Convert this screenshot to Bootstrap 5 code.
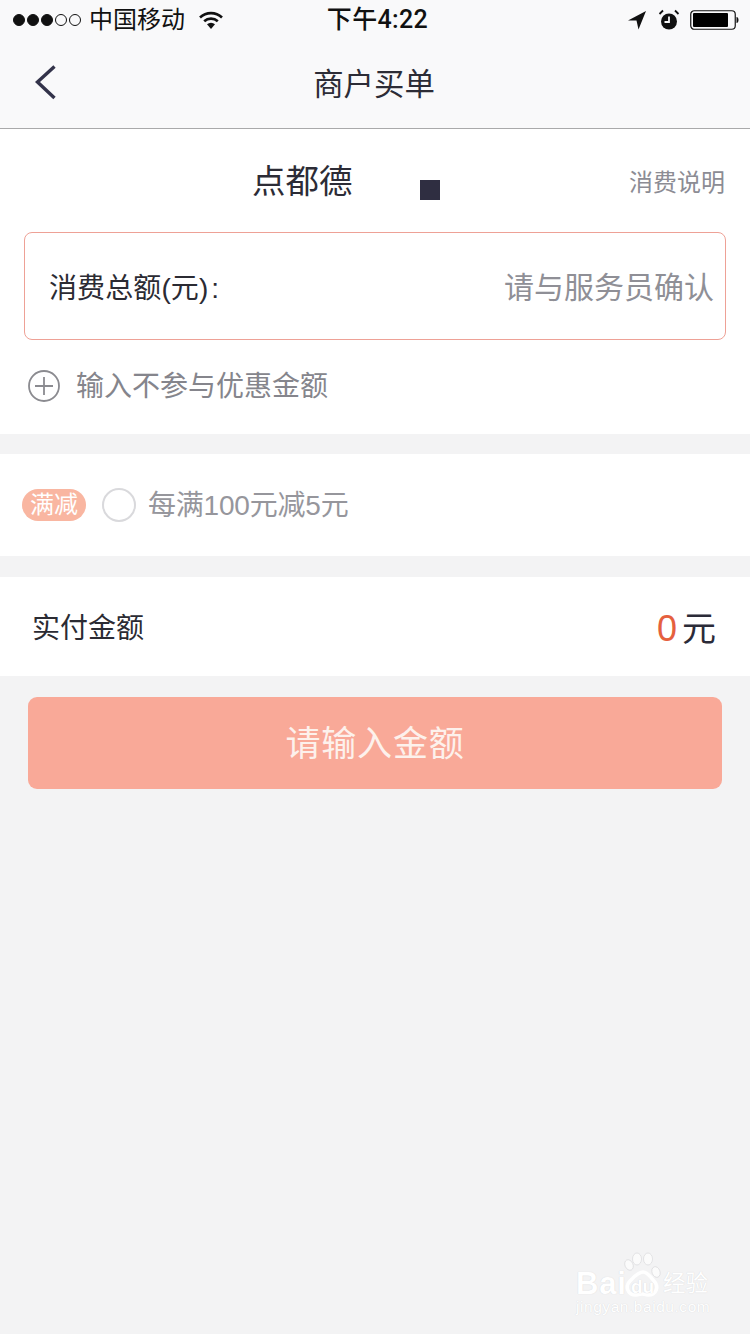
<!DOCTYPE html>
<html lang="zh">
<head>
<meta charset="utf-8">
<title>商户买单</title>
<link rel="stylesheet" href="https://cdn.jsdelivr.net/npm/bootstrap@5.3.0/dist/css/bootstrap.min.css">
<style>
html,body{width:750px;height:1334px;overflow:hidden}
body{background:#f3f3f4;font-family:"Liberation Sans","Noto Sans CJK SC",sans-serif;color:#2b2b38;position:relative}
.topbar{background:#f9f9fa;border-bottom:1px solid #a9a9aa;height:129px}
.statusrow{height:40px;padding:0 11px 0 13px;font-size:24px;color:#111}
.sigdots{gap:2px;width:68px}
.sigdot{width:12px;height:12px;border-radius:50%;border:1px solid #111}
.sigdot.on{background:#111}
.carrier{margin-left:8px;line-height:40px;width:97px;white-space:nowrap}
.wifi{margin-left:12px}
.alarmicon{margin:0 10px 0 11px}
.clock{position:absolute;left:0;right:0;top:0;line-height:40px;text-align:center;font-family:Roboto,"Noto Sans CJK SC",sans-serif;font-weight:500;font-size:25px;letter-spacing:.35px;pointer-events:none;padding-left:5px;color:#111}
.navrow{height:88px;position:relative}
.backlink{position:absolute;left:33px;top:24px;line-height:0}
.navname{font-size:30.4px;line-height:88px;text-align:center;color:#2c2c36;padding-right:2px}
.sheet{background:#fff}
.mainsheet{height:305px;padding-top:1px}
.titlerow{height:102px;padding:0 25px 0 252px}
.shopname{font-size:33.500px;line-height:1;margin-top:2px;color:#2c2c36}
.helplink{font-size:24px;color:#8c8c94;margin-top:3px}
.blocksq{position:absolute;left:420px;top:180px;width:20px;height:20px;background:#2f2e41}
.amountbox{margin:0 24px;height:108px;border:1px solid #eea196;border-radius:8px;padding:0 11px 0 24px}
.amountlabel{font-size:28px;color:#2b2b33;margin-top:5px;letter-spacing:.1px}
.labelcolon{margin-left:3px}
.amounthint{font-size:30px;color:#8f8f96;white-space:nowrap;margin-top:2px}
.extra{margin:0 0 0 28px;height:92px;gap:16px;font-size:28px;color:#85858c}
.extratext{margin-top:1px}
.promo{height:102px;margin-top:20px;padding-left:22px}
.promotag{width:64px;height:32px;border-radius:16px;background:#f9b6a1;color:#fff;font-size:24px;line-height:32px;text-align:center}
.radiomark{width:34px;height:34px;border-radius:50%;border:2px solid #d9d9dc;margin-left:16px;margin-right:12px;background:#fff}
.promotext{font-size:28px;color:#96969c;letter-spacing:-.2px;white-space:nowrap;margin-top:2px}
.payrow{height:99px;margin-top:21px;padding:0 34px 0 32px}
.paylabel{font-size:28px;color:#2b2b33;margin-top:5px}
.paysum{font-size:34px;margin-top:5px;line-height:1}
.payzero{color:#e5603e;font-size:36px;margin-right:5px}
.submitbtn{display:block;width:694px;height:92px;margin:21px 28px 0;background:#f9a998;border:0;border-radius:9px;color:#fdf1ec;font-size:35px;letter-spacing:.8px;padding:3px 0 0}
.submitbtn:hover,.submitbtn:disabled{background:#f9a998;color:#fdf1ec;opacity:1}
.mark-wm{position:absolute;left:576px;top:1252px;width:134px;height:66px;color:#fff;text-shadow:0 0 1px #cfcfd2}
.wm-bai{position:absolute;left:0;top:15px;font-size:31px;font-weight:700;line-height:34px;letter-spacing:.8px}
.wm-du{position:absolute;left:50px;top:24px;width:33px;text-align:center;font-size:19px;font-weight:700;line-height:22px}
.wm-jy{position:absolute;left:87px;top:19px;font-size:22.500px;line-height:26px;white-space:nowrap}
.wm-url{position:absolute;left:0;top:46px;font-size:15.500px;line-height:18px;white-space:nowrap;letter-spacing:.55px}
.wm-paw{position:absolute;left:48px;top:0}
</style>
</head>
<body>
<header class="topbar">
  <div class="statusrow d-flex align-items-center">
    <div class="sigdots d-flex">
      <span class="sigdot on"></span><span class="sigdot on"></span><span class="sigdot on"></span><span class="sigdot"></span><span class="sigdot"></span>
    </div>
    <span class="carrier">中国移动</span>
    <svg class="wifi" width="26" height="20" viewBox="0 0 26 20"><path d="M2 7.500a16 16 0 0 1 22 0" fill="none" stroke="#111" stroke-width="2.600"/><path d="M6.200 11.300a10 10 0 0 1 13.600 0" fill="none" stroke="#111" stroke-width="2.600"/><path d="M9 14.200a6 6 0 0 1 8 0L13 19z" fill="#111"/></svg>
    <div class="ms-auto d-flex align-items-center">
      <svg width="20" height="20" viewBox="0 0 20 20"><path d="M19 1 1 10.500h8.500L11.500 19.500z" fill="#111"/></svg>
      <svg class="alarmicon" width="22" height="22" viewBox="0 0 22 22"><circle cx="11" cy="12.500" r="8" fill="#111"/><path d="M11 7.500v5.500H6.500" fill="none" stroke="#f9f9fa" stroke-width="1.800"/><path d="M1.500 5 5 1.500M20.500 5 17 1.500" stroke="#111" stroke-width="1.800"/></svg>
      <svg width="49" height="20" viewBox="0 0 49 20"><rect x=".75" y=".75" width="44.500" height="18.500" rx="3.500" fill="none" stroke="#111" stroke-width="1.200"/><rect x="3" y="3" width="35" height="14" rx="1" fill="#000"/><path d="M46.500 7c1.500.2 2 1.500 2 3s-.5 2.800-2 3z" fill="#111"/></svg>
    </div>
  </div>
  <div class="clock">下午4:22</div>
  <nav class="navrow">
    <a class="backlink" href="#" aria-label="返回"><svg width="24" height="40" viewBox="0 0 24 40"><path d="M21.500 2.500 4.500 18 21.500 34" fill="none" stroke="#33334a" stroke-width="3.400"/></svg></a>
    <div class="navname">商户买单</div>
  </nav>
</header>

<main>
  <section class="sheet mainsheet">
    <div class="titlerow d-flex align-items-center justify-content-between">
      <span class="shopname">点都德</span>
      <a class="helplink text-decoration-none" href="#">消费说明</a>
    </div>
    <div class="amountbox d-flex align-items-center justify-content-between">
      <span class="amountlabel">消费总额(元)<span class="labelcolon">:</span></span>
      <span class="amounthint">请与服务员确认</span>
    </div>
    <div class="extra d-flex align-items-center">
      <svg width="32" height="32" viewBox="0 0 32 32"><circle cx="16" cy="16" r="15" fill="none" stroke="#8b8b90" stroke-width="1.800"/><path d="M16 7v18M7 16h18" stroke="#8b8b90" stroke-width="1.800"/></svg>
      <span class="extratext">输入不参与优惠金额</span>
    </div>
  </section>

  <section class="sheet promo d-flex align-items-center">
    <span class="promotag">满减</span>
    <span class="radiomark"></span>
    <span class="promotext">每满100元减5元</span>
  </section>

  <section class="sheet payrow d-flex align-items-center justify-content-between">
    <span class="paylabel">实付金额</span>
    <span class="paysum"><span class="payzero">0</span>元</span>
  </section>

  <button class="btn submitbtn" type="button">请输入金额</button>
</main>

<div class="blocksq"></div>

<div class="mark-wm">
  <span class="wm-bai">Bai</span>
  <svg class="wm-paw" width="40" height="50" viewBox="0 0 40 50"><g fill="#fbfbfb" stroke="#dadadc" stroke-width=".7"><ellipse cx="5" cy="13" rx="4" ry="5.500" transform="rotate(-25 5 13)"/><ellipse cx="13" cy="7" rx="4.500" ry="6"/><ellipse cx="24" cy="7" rx="4.500" ry="6"/><ellipse cx="32" cy="20" rx="4" ry="5.500" transform="rotate(-20 32 20)"/></g><path d="M19 20c5 0 7 5 11 9 5 5 3 14-6 14-3 0-4-1-6-1s-3 1-6 1c-9 0-11-9-6-14 4-4 8-9 13-9z" fill="none" stroke="#fff" stroke-width="3.500"/></svg>
  <span class="wm-du">du</span>
  <span class="wm-jy">经验</span>
  <span class="wm-url">jingyan.baidu.com</span>
</div>
<script src="https://cdn.jsdelivr.net/npm/bootstrap@5.3.0/dist/js/bootstrap.bundle.min.js"></script>
</body>
</html>
